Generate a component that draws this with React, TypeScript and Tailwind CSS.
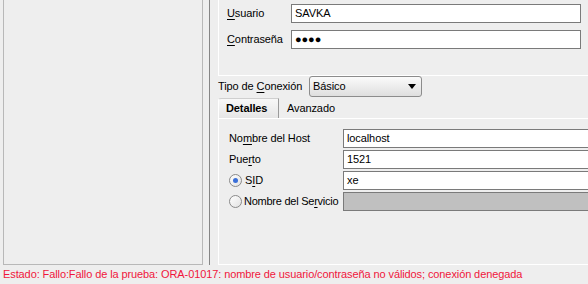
import React from 'react';

// Mnemonic letter, underlined like a Swing label
function M({ children }: { children: React.ReactNode }) {
  return <span className="underline underline-offset-2">{children}</span>;
}

function Field({ value, disabled }: { value?: string; disabled?: boolean }) {
  return (
    <div
      className={
        'h-[19px] flex items-center px-[3px] border border-[#7a7a7a] ' +
        (disabled ? 'bg-[#c0c0c0]' : 'bg-white')
      }
    >
      <span className="leading-none text-black">{value}</span>
    </div>
  );
}

function Radio({ checked }: { checked?: boolean }) {
  return (
    <span className="w-[13px] h-[13px] rounded-full border border-[#8a8a8a] bg-gradient-to-br from-[#ffffff] to-[#e2e2e2] flex items-center justify-center shrink-0">
      {checked && <span className="w-[5px] h-[5px] rounded-full bg-[#3a6fd8]" />}
    </span>
  );
}

export default function App() {
  return (
    <div
      className="w-[588px] h-[284px] bg-[#eeeeee] overflow-hidden flex flex-col text-[11px] tracking-[-0.1px] text-black"
      style={{ fontFamily: '"Liberation Sans", Arial, sans-serif' }}
    >
      <div className="h-[265px] flex shrink-0">
        {/* left tree panel */}
        <div className="ml-[3px] w-[200px] border-x border-b border-[#b8b8b8]" />

        {/* splitter line */}
        <div className="ml-[6px] w-px bg-[#858585]" />

        {/* right form area */}
        <div className="ml-[8px] flex-1 flex flex-col min-w-0">
          {/* credentials panel */}
          <div className="h-[76px] border-l border-b border-white pt-[4px] pl-[8px] pr-[7px] flex flex-col gap-[7px]">
            <div className="flex items-center">
              <span className="w-[64px]">
                <M>U</M>suario
              </span>
              <div className="flex-1">
                <Field value="SAVKA" />
              </div>
            </div>
            <div className="flex items-center">
              <span className="w-[64px]">
                <M>C</M>ontraseña
              </span>
              <div className="flex-1">
                <Field value="●●●●" />
              </div>
            </div>
          </div>

          {/* connection type */}
          <div className="h-[21px] flex items-center">
            <span className="w-[91px]">
              Tipo de <M>C</M>onexión
            </span>
            <div className="w-[113px] h-[21px] rounded-[3px] border border-[#8c8c8c] bg-gradient-to-b from-[#fbfbfb] to-[#dedede] flex items-center pl-[3px] pr-[5px]">
              <span className="flex-1">Básico</span>
              <svg width="8" height="5" viewBox="0 0 8 5">
                <path d="M0 0H8L4 5Z" fill="#000" />
              </svg>
            </div>
          </div>

          {/* tabs */}
          <div className="mt-[1px] h-[20px] flex items-end">
            <div className="h-[20px] w-[61px] rounded-tl-[3px] border-t border-l border-r border-t-[#cfcfcf] border-l-white border-r-[#9a9a9a] bg-gradient-to-b from-[#f8f8f8] to-[#e6e6e6] flex items-center pl-[7px] font-bold">
              Detalles
            </div>
            <div className="h-[20px] flex items-center pl-[8px]">Avanzado</div>
          </div>

          {/* tab content */}
          <div className="flex-1 border-l border-t border-b border-white pt-[10px] pl-[10px] flex flex-col gap-[2px]">
            <div className="flex items-center">
              <span className="w-[114px]">
                No<M>m</M>bre del Host
              </span>
              <div className="flex-1 -mr-[10px]">
                <Field value="localhost" />
              </div>
            </div>
            <div className="flex items-center">
              <span className="w-[114px]">
                Pue<M>r</M>to
              </span>
              <div className="flex-1 -mr-[10px]">
                <Field value="1521" />
              </div>
            </div>
            <div className="flex items-center">
              <span className="w-[114px] flex items-center gap-[3px]">
                <Radio checked />
                <span>
                  S<M>I</M>D
                </span>
              </span>
              <div className="flex-1 -mr-[10px]">
                <Field value="xe" />
              </div>
            </div>
            <div className="flex items-center">
              <span className="w-[114px] flex items-center gap-[2px]">
                <Radio />
                <span className="whitespace-nowrap tracking-[-0.25px]">
                  Nombre del Se<M>r</M>vicio
                </span>
              </span>
              <div className="flex-1 -mr-[10px]">
                <Field disabled />
              </div>
            </div>
          </div>
        </div>
      </div>

      {/* status line */}
      <div className="flex-1 flex items-center pl-[3px] text-[#f0163c] whitespace-nowrap">
        Estado: Fallo:Fallo de la prueba: ORA-01017: nombre de usuario/contraseña no válidos; conexión denegada
      </div>
    </div>
  );
}
